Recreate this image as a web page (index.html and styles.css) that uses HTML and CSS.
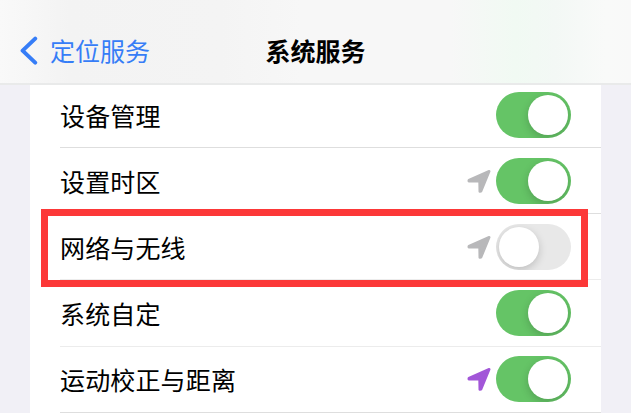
FILE: index.html
```html
<!DOCTYPE html>
<html lang="zh-CN">
<head>
<meta charset="utf-8">
<title>系统服务</title>
<link rel="stylesheet" href="styles.css">
</head>
<body>
<svg class="defs" aria-hidden="true">
  <symbol id="arrow" viewBox="0 0 24 24"><path d="M22.2 2.3 14 22.3 12.8 22.5 12.6 12.2 1.8 12.1 1.9 11.2Z" fill="currentColor" stroke="currentColor" stroke-width="2.6" stroke-linejoin="round"/></symbol>
</svg>
<header class="nav">
  <a class="back">
    <svg class="chevron" viewBox="0 0 18 30"><path d="M15.2 2.6 2.6 14.6 15.2 26.6" fill="none" stroke="currentColor" stroke-width="4" stroke-linecap="round" stroke-linejoin="round"/></svg>
    <span>定位服务</span>
  </a>
  <h1 class="title">系统服务</h1>
</header>
<main class="list">
  <div class="row"><span class="label">设备管理</span><i class="toggle on"></i></div>
  <div class="row"><span class="label">设置时区</span><svg class="arrow"><use href="#arrow"/></svg><i class="toggle on"></i></div>
  <div class="row light"><span class="label">网络与无线</span><svg class="arrow"><use href="#arrow"/></svg><i class="toggle"></i></div>
  <div class="row tall"><span class="label">系统自定</span><i class="toggle on"></i></div>
  <div class="row last"><span class="label">运动校正与距离</span><svg class="arrow active"><use href="#arrow"/></svg><i class="toggle on"></i></div>
</main>
<div class="highlight"></div>
</body>
</html>
```
FILE: styles.css
```css
* { box-sizing: border-box; }
body {
  margin: 0;
  width: 631px;
  height: 413px;
  overflow: hidden;
  position: relative;
  background: #f1f0f6;
  color: #000;
  font-family: "Noto Sans CJK SC", sans-serif;
  font-size: 25px;
  letter-spacing: 0.15px;
}
.defs { position: absolute; width: 0; height: 0; }
.nav {
  position: relative;
  z-index: 1;
  display: grid;
  grid-template-columns: 1fr auto 1fr;
  align-items: center;
  height: 85px;
  padding: 16px 0 0 20px;
  border-bottom: 2px solid #e9eaea;
  background: linear-gradient(90deg, #f9f9f9 0, #f3f3f3 70px, #f4f4f4 220px, #f7f7f7 300px, #f7f7f7 450px, #f1faf3 515px, #f3f8f5 555px, #f9faf9 605px, #f9f9f9 100%);
}
.back {
  display: flex;
  align-items: center;
  gap: 12px;
  color: #367df7;
  line-height: 36px;
  letter-spacing: 0;
}
.chevron { width: 18px; height: 30px; margin-top: 3px; }
.title {
  margin: 0 20px 0 0;
  font-size: 25px;
  font-weight: 700;
  line-height: 36px;
  letter-spacing: 0;
}
.list {
  margin: -3px 30px 0 30px;
  padding-left: 30px;
  background: #fff;
}
.row {
  display: flex;
  height: 66px;
  padding: 10px 29.6px 0 0;
  border-bottom: 1px solid #dedede;
}
.row.light { border-color: #ececec; }
.row.tall { height: 67px; border-color: #ececec; }
.row.last { padding-top: 9px; }
.label { flex: 1; line-height: 47px; }
.arrow { width: 24px; height: 24px; margin: 11px 5px 0 0; color: #b8b8ba; }
.arrow.active { color: #a256d8; }
.toggle {
  width: 75px;
  height: 46px;
  padding: 3px;
  border-radius: 23px;
  background: #e8e8e8;
  overflow: hidden;
}
.toggle::before {
  content: "";
  display: block;
  width: 40px;
  height: 40px;
  border-radius: 50%;
  background: #fff;
  box-shadow: 0 3px 8px rgba(0, 0, 0, 0.18);
}
.toggle.on { background: #65c466; }
.toggle.on::before { margin-left: 29px; }
.highlight {
  position: absolute;
  z-index: 2;
  left: 41px;
  top: 209px;
  width: 547px;
  height: 78px;
  border: 7px solid #fc3838;
}
```
